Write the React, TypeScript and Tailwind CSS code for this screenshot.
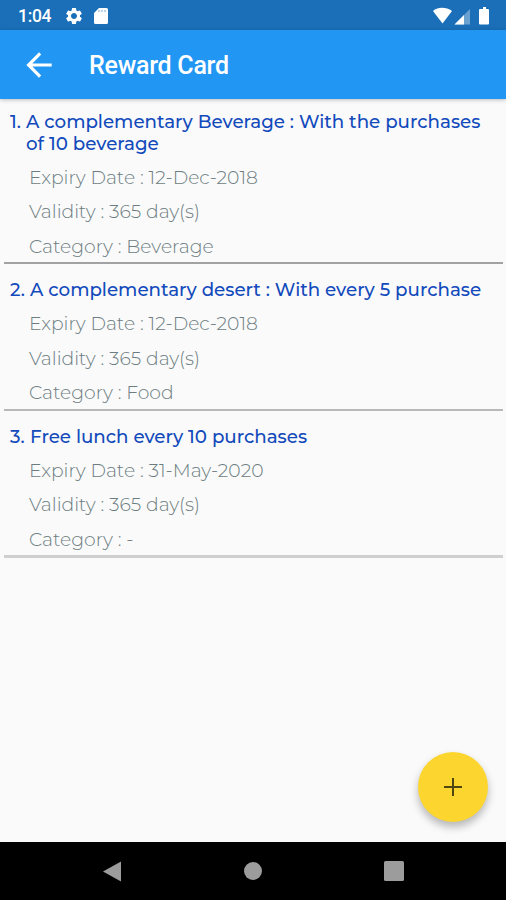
import { MdArrowBack, MdSettings } from 'react-icons/md';

interface Reward {
  titleLines: string[];
  numberClass: string;
  expiry: string;
  category: string;
  ruleClass: string;
}

const rewards: Reward[] = [
  {
    titleLines: ['A complementary Beverage : With the purchases', 'of 10 beverage'],
    numberClass: 'w-4',
    expiry: '12-Dec-2018',
    category: 'Beverage',
    ruleClass: 'h-[2px] bg-[#a2a2a2]',
  },
  {
    titleLines: ['A complementary desert : With every 5 purchase'],
    numberClass: 'w-5',
    expiry: '12-Dec-2018',
    category: 'Food',
    ruleClass: 'h-[2px] bg-[#b8b8b8]',
  },
  {
    titleLines: ['Free lunch every 10 purchases'],
    numberClass: 'w-5',
    expiry: '31-May-2020',
    category: '-',
    ruleClass: 'h-[3px] bg-[#cfcfcf]',
  },
];

function StatusBar() {
  return (
    <div className="flex h-[30px] shrink-0 items-center justify-between bg-[#1a6fb8] pt-px pr-4 pl-[18px] text-white">
      <div className="flex items-center">
        <span className="mt-px w-[46px] text-[17.5px] font-medium tracking-[-0.3px]">1:04</span>
        <MdSettings className="size-[20px]" />
        <svg className="ml-2.5 h-4 w-[14px]" viewBox="0 0 14 16" fill="currentColor">
          <path d="M5 0h7.500A1.500 1.500 0 0 1 14 1.500v13a1.500 1.500 0 0 1-1.500 1.500h-11A1.500 1.500 0 0 1 0 14.500V5z" />
          <path d="M5 2v2M8 2v2M11 2v2" stroke="#1a6fb8" strokeWidth="1.2" opacity=".5" />
        </svg>
      </div>
      <svg className="h-[18px] w-[58px]" viewBox="0 0 58 18" fill="currentColor">
        <path d="M1 4C6-.3 14-.3 20 4L10.500 16.500z" />
        <path d="M38 2v15.500H22.500z" opacity=".35" />
        <path d="M32 8v9.500H22.500z" />
        <path d="M49 2h2V0h3v2h2a1 1 0 0 1 1 1v13.500a1 1 0 0 1-1 1h-8a1 1 0 0 1-1-1V3a1 1 0 0 1 1-1z" />
      </svg>
    </div>
  );
}

function AppBar() {
  return (
    <header className="z-10 flex h-[69px] shrink-0 items-center bg-[#2296f3] pl-5 text-white shadow-[0_1px_4px_rgba(0,0,0,0.25)]">
      <button>
        <MdArrowBack className="size-[38px]" />
      </button>
      <h1 className="mt-[3px] ml-[31px] text-[25px] font-medium tracking-[-0.25px]">Reward Card</h1>
    </header>
  );
}

function RewardItem({ reward, index }: { reward: Reward; index: number }) {
  return (
    <li className="pr-[3px] pl-1">
      <div className="flex pl-1.5 text-[18.25px] leading-[22px] font-medium text-[#124abc]">
        <span className={`shrink-0 ${reward.numberClass}`}>{index + 1}.</span>
        <div className="whitespace-nowrap">
          {reward.titleLines.map((line) => (
            <p key={line}>{line}</p>
          ))}
        </div>
      </div>
      <div className="mt-1.5 h-[101.4px] pl-[25px] text-[18.75px] leading-[34.4px] font-light whitespace-nowrap text-[#6c7d81]">
        <p>Expiry Date : {reward.expiry}</p>
        <p>Validity : 365 day(s)</p>
        <p>Category : {reward.category}</p>
      </div>
      <div className={reward.ruleClass} />
    </li>
  );
}

function NavBar() {
  return (
    <nav className="flex h-[58px] shrink-0 items-center justify-between bg-black px-[102px] text-[#9c9c9c]">
      <svg className="h-[21px] w-5" viewBox="0 0 20 21" fill="currentColor">
        <path d="M19 .5v20L1 10.500z" />
      </svg>
      <div className="size-[18px] rounded-full bg-current" />
      <div className="size-5 rounded-[1.5px] bg-current" />
    </nav>
  );
}

export default function App() {
  return (
    <div className="relative flex h-[900px] w-[506px] flex-col overflow-hidden bg-[#fafafa] font-['Roboto',sans-serif]">
      <StatusBar />
      <AppBar />
      <main className="grow pt-3 font-['Montserrat',sans-serif]">
        <ul className="flex flex-col gap-[15px]">
          {rewards.map((reward, i) => (
            <RewardItem key={i} reward={reward} index={i} />
          ))}
        </ul>
      </main>
      <button className="absolute right-[18px] bottom-[78px] flex size-[70px] items-center justify-center rounded-full bg-[#fdd52f] text-[#51460f] shadow-[0_5px_8px_rgba(0,0,0,0.28)]">
        <svg className="size-[18px]" viewBox="0 0 18 18" stroke="currentColor" strokeWidth="2">
          <path d="M9 0v18M0 9h18" />
        </svg>
      </button>
      <NavBar />
    </div>
  );
}
